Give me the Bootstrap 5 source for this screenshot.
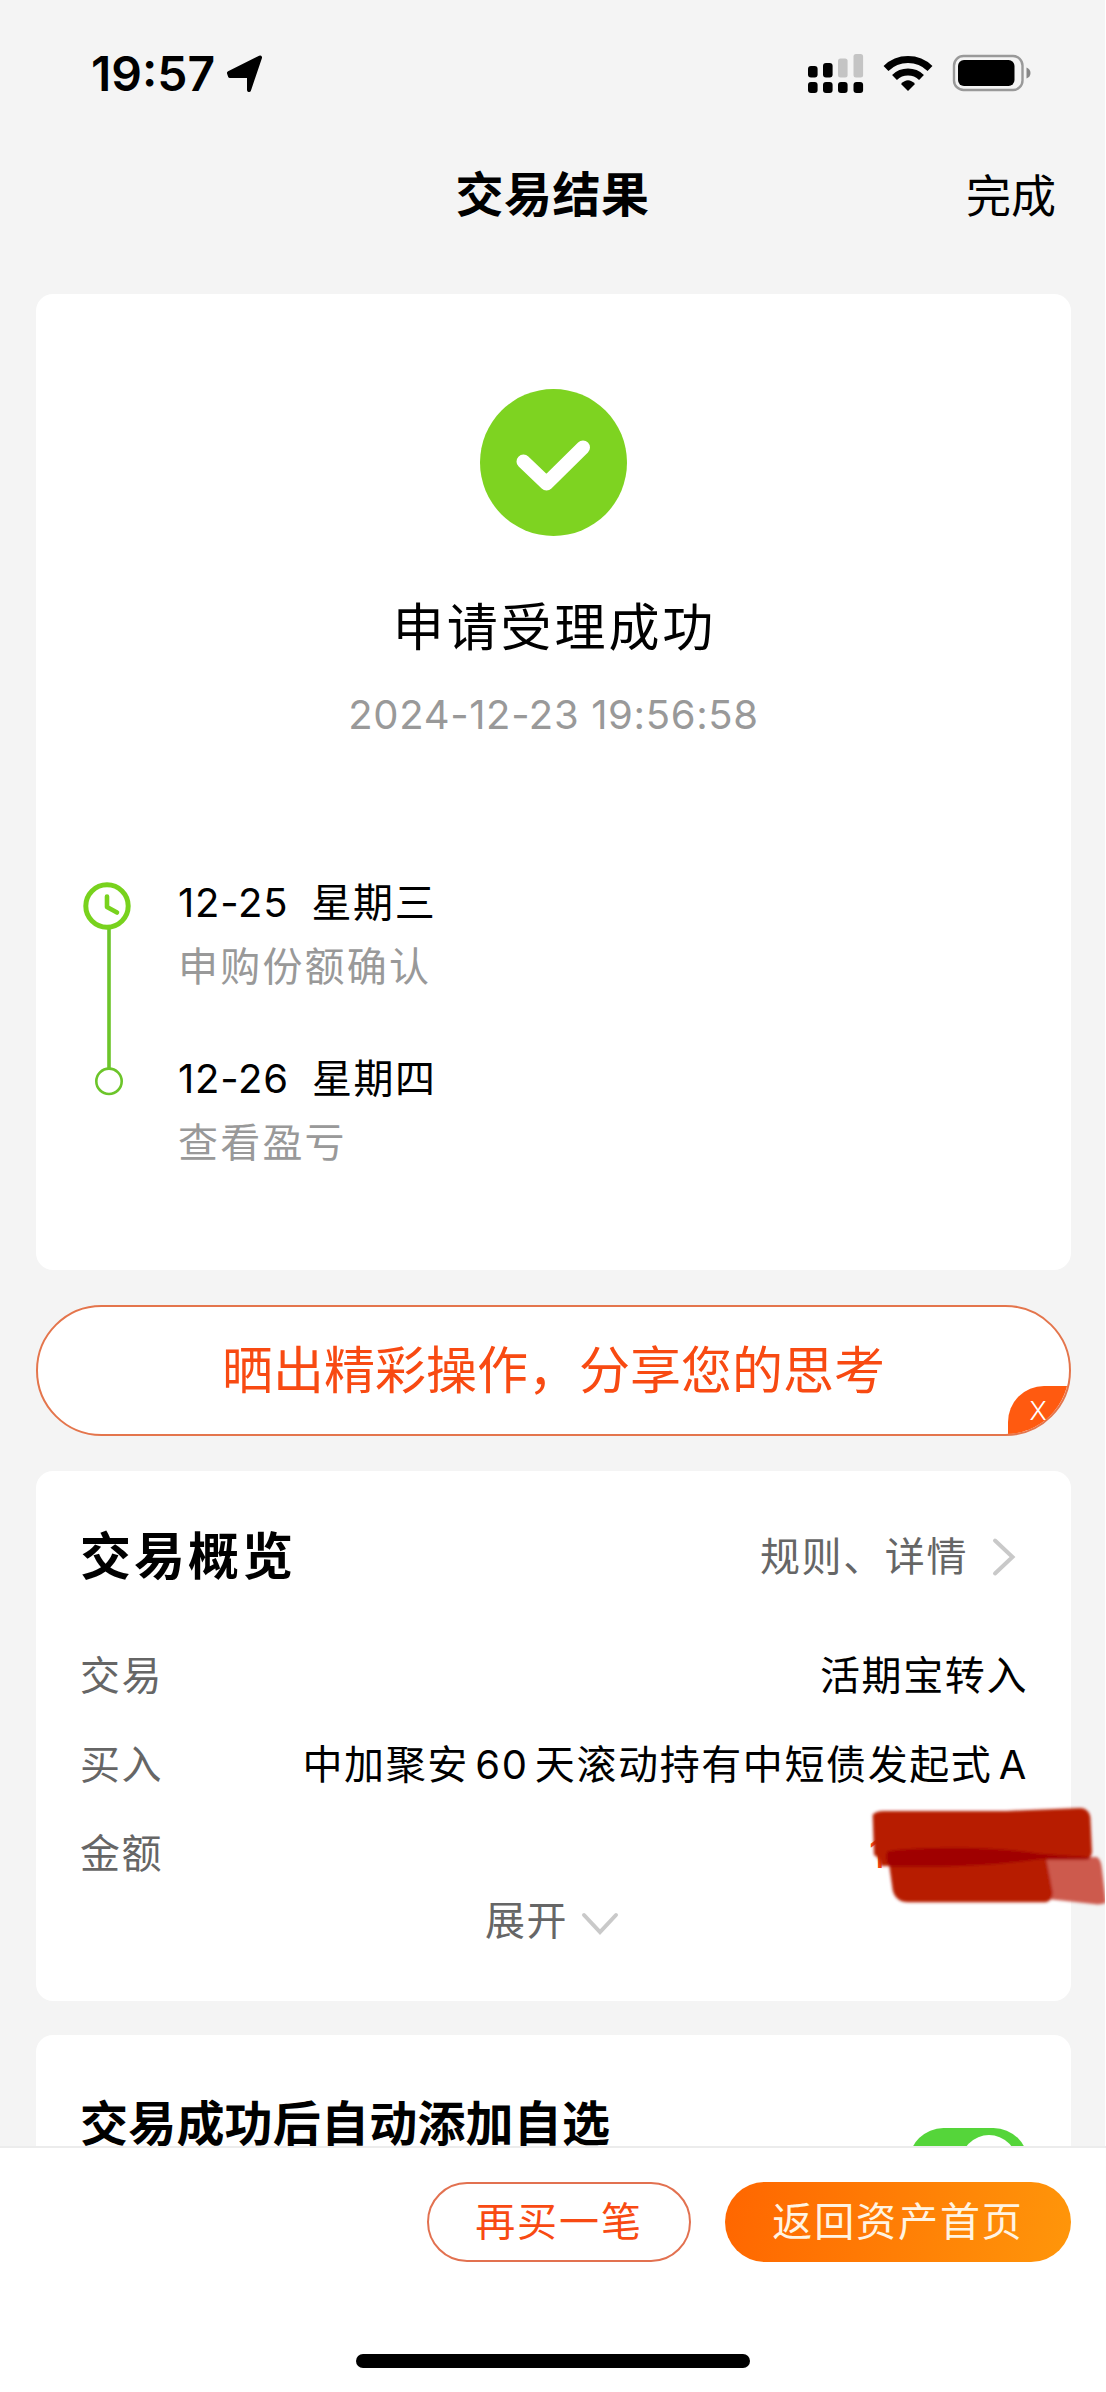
<!DOCTYPE html>
<html lang="zh-CN">
<head>
<meta charset="utf-8">
<meta name="viewport" content="width=device-width, initial-scale=1">
<title>交易结果</title>
<link href="https://cdn.jsdelivr.net/npm/bootstrap@5.3.0/dist/css/bootstrap.min.css" rel="stylesheet">
<style>
  body { background: #fff; color: #000; font-family: Inter, "Noto Sans CJK SC", sans-serif; font-size: 40px; line-height: 60px; }
  svg { display: block; }
  .app { width: 1106px; height: 2392px; overflow: hidden; }
  .screen { width: 1105px; height: 2146px; background: #f4f4f4; overflow: hidden; }
  .status { height: 148px; padding: 0 73px 0 91px; }
  .clock { font-size: 48px; font-weight: 600; letter-spacing: 0; }
  .arrow { margin-left: 11px; }
  .topbar { height: 93px; }
  .topbar h1 { font-size: 48px; font-weight: 700; letter-spacing: .5px; line-height: 60px; margin: 0; }
  .done { font-size: 45px; right: 49px; top: 19px; line-height: 60px; color: #000; }
  .stack { padding: 53px 34px 0 36px; }
  .panel { border: 0; border-radius: 17px; background: #fff; color: #000; }
  .panel-result { height: 976px; padding: 95px 40px 0; }
  .result-title { font-size: 51px; letter-spacing: 2.9px; line-height: 64px; margin: 60px 0 30px; font-weight: 400; padding-left: 2px; }
  .stamp { color: #999; line-height: 50px; letter-spacing: .65px; margin-bottom: 132px; }
  .steps { gap: 38px; letter-spacing: 1.5px; }
  .step-text { padding-top: 1px; }
  .step-date { letter-spacing: .8px; }
  .step-day { margin-left: 23px; letter-spacing: 1.6px; }
  .soft { color: #999; letter-spacing: 2.2px; }
  .mid { color: #666; letter-spacing: 1.6px; }
  .share { height: 131px; margin: 35px 0; border: 2px solid #e4754c; border-radius: 66px; background: #fff; color: #f84a12; font-size: 51px; overflow: hidden; }
  .share-close { right: -2px; bottom: -2px; width: 63px; height: 50px; border-radius: 36px 0 0 0; background: #ff5a10; color: #fff; font-size: 26px; font-weight: 300; line-height: 50px; padding-right: 3px; }
  .panel-overview { height: 530px; padding: 56px 43px 0 44px; }
  .panel-overview h2 { font-size: 51px; font-weight: 700; letter-spacing: 3px; line-height: 60px; margin: 0; }
  .pairs { margin-top: 44px; }
  .pair { height: 89px; line-height: 89px; }
  .val { letter-spacing: 1.6px; word-spacing: -6.5px; }
  .amount { color: #f84a12; width: 159px; }
  .more { line-height: 50px; gap: 13px; margin: -2px 4px 0 0; }
  .more svg { margin-top: 5px; }
  .scribble { left: 804px; top: 309px; }
  .panel-watch { margin-top: 34px; height: 300px; padding: 59px 43px 0 44px; }
  .panel-watch h2 { font-size: 48px; font-weight: 700; letter-spacing: .2px; line-height: 60px; margin: 0; }
  .toggle { width: 119px; height: 69px; border-radius: 35px; background: #55d53a; padding: 7px 11px; margin-top: 34px; }
  .knob { width: 56px; height: 56px; border-radius: 50%; background: #fff; }
  .actions { height: 246px; border-top: 2px solid #ececec; background: #fff; }
  .action-row { padding: 34px 35px 0 0; gap: 34px; }
  .pill { height: 80px; border-radius: 40px; padding: 0; font-size: 40px; letter-spacing: 1.9px; line-height: 76px; }
  .pill-again { width: 264px; border: 2px solid #e27150; color: #f84a12; }
  .pill-home { width: 346px; border: 0; color: #fff4e2; background: linear-gradient(100deg, #ff6600, #ff960a); }
  .home-bar { width: 394px; height: 14px; border-radius: 7px; background: #000; margin-top: 92px; }
</style>
</head>
<body>
<div class="app">
  <div class="screen">
    <header>
      <div class="status d-flex align-items-center">
        <span class="clock">19:57</span>
        <svg class="arrow" width="40" height="40" viewBox="0 0 40 40"><path d="M3 19 34 3.500 23 36V22H4Z" stroke="#000" stroke-width="4" stroke-linejoin="round"/></svg>
        <svg class="ms-auto" width="224" height="44" viewBox="808 52 224 44">
          <g><rect x="808" y="66" width="9.600" height="11.500" rx="3"/><rect x="823" y="63" width="9.600" height="14.500" rx="3"/><g fill="#c4c4c4"><rect x="838" y="58.500" width="9.600" height="19" rx="2.500"/><rect x="853.500" y="54" width="9.600" height="23.500" rx="2.500"/></g>
          <rect x="808" y="82" width="9.600" height="11" rx="3"/><rect x="823" y="82" width="9.600" height="11" rx="3"/><rect x="838" y="82" width="9.600" height="11" rx="3"/><rect x="853.500" y="82" width="9.600" height="11" rx="3"/></g>
          <g fill="none" stroke="#000" stroke-width="7"><path d="M886 68.500A31.500 31.500 0 0 1 930 68.500"/><path d="M894.500 77.500A19.500 19.500 0 0 1 921.500 77.500"/></g>
          <path d="M908 91 901 84Q908 76.500 915 84Z"/>
          <rect x="954" y="56" width="68.500" height="34" rx="9.500" fill="none" stroke="#999" stroke-width="2.400"/>
          <rect x="958" y="60" width="56.500" height="26" rx="6"/>
          <path d="M1026.500 67.500Q1030.500 69 1030.500 73T1026.500 78.500Z" fill="#888"/>
        </svg>
      </div>
      <div class="topbar position-relative d-flex justify-content-center align-items-center">
        <h1>交易结果</h1>
        <a class="done position-absolute text-decoration-none">完成</a>
      </div>
    </header>

    <main class="stack">
      <section class="card panel panel-result">
        <div class="text-center">
          <svg class="mx-auto" width="147" height="147" viewBox="0 0 147 147"><circle cx="73.500" cy="73.500" r="73.500" fill="#7ed321"/><path d="M43.500 72.500 66.500 94.500 103 58.500" fill="none" stroke="#fff" stroke-width="14" stroke-linecap="round" stroke-linejoin="round"/></svg>
          <h2 class="result-title">申请受理成功</h2>
          <div class="stamp">2024-12-23 19:56:58</div>
        </div>
        <div class="steps d-flex">
          <svg width="64" height="235" viewBox="76 872 64 235" fill="none">
            <path d="M109 928V1068" stroke="#6cc52a" stroke-width="3.600"/>
            <circle cx="107" cy="906" r="21.200" stroke="#78d21d" stroke-width="5"/>
            <path d="M107 896.500V907L117 912.500" stroke="#78d21d" stroke-width="4.600" stroke-linecap="round" stroke-linejoin="round"/>
            <circle cx="109" cy="1081.300" r="12.700" stroke="#6cc52a" stroke-width="2.600"/>
          </svg>
          <div class="step-text">
            <div><span class="step-date">12-25</span><span class="step-day">星期三</span></div>
            <div class="soft mt-1">申购份额确认</div>
            <div class="mt-5 pt-1"><span class="step-date">12-26</span><span class="step-day">星期四</span></div>
            <div class="soft mt-1">查看盈亏</div>
          </div>
        </div>
      </section>

      <div class="share position-relative d-flex justify-content-center align-items-center">
        晒出精彩操作，分享您的思考
        <span class="share-close position-absolute text-center">X</span>
      </div>

      <section class="card panel panel-overview position-relative">
        <div class="d-flex justify-content-between align-items-center">
          <h2>交易概览</h2>
          <div class="mid d-flex align-items-center">规则、详情
            <svg width="60" height="42" viewBox="0 0 60 42"><path d="M27 4.500 44.500 21 27 37.500" fill="none" stroke="#c9c9c9" stroke-width="4" stroke-linecap="round"/></svg>
          </div>
        </div>
        <div class="pairs">
          <div class="pair d-flex justify-content-between"><span class="mid">交易</span><span class="val">活期宝转入</span></div>
          <div class="pair d-flex justify-content-between"><span class="mid">买入</span><span class="val">中加聚安 60 天滚动持有中短债发起式 A</span></div>
          <div class="pair d-flex justify-content-between"><span class="mid">金额</span><span class="amount">1</span></div>
        </div>
        <div class="more mid d-flex justify-content-center align-items-center">展开
          <svg width="38" height="24" viewBox="0 0 38 24"><path d="M3 3 19 20 35 3" fill="none" stroke="#c9c9c9" stroke-width="4" stroke-linecap="round"/></svg>
        </div>
        <!-- red brush strokes hiding the amount -->
        <svg class="scribble position-absolute" width="266" height="150" viewBox="0 0 798 450">
          <defs><filter id="soft-edge" x="-5%" y="-10%" width="110%" height="120%"><feGaussianBlur stdDeviation="4"/></filter></defs>
          <g filter="url(#soft-edge)">
            <path d="M612 236 770 231Q782 236 785 260L798 368Q780 376 760 372L630 358Z" fill="#cd5a4e"/>
            <path d="M98 104Q108 93 130 93H500L720 84Q745 84 751 110L756 215Q754 238 735 240H600L440 258H122Q118 230 102 225Z" fill="#b71c02"/>
            <path d="M144 230 158 330Q166 366 205 367H618Q640 360 638 335L617 225Z" fill="#b71c02"/>
            <path d="M142 214Q200 203 350 203 480 203 600 221L748 232V238H600Q450 258 300 260H150Q134 240 142 214Z" fill="#a00000"/>
          </g>
        </svg>
      </section>

      <section class="card panel panel-watch flex-row justify-content-between align-items-start">
        <h2>交易成功后自动添加自选</h2>
        <div class="toggle d-flex justify-content-end"><span class="knob"></span></div>
      </section>
    </main>
  </div>

  <footer class="actions">
    <div class="action-row d-flex justify-content-end">
      <button class="btn pill pill-again">再买一笔</button>
      <button class="btn pill pill-home">返回资产首页</button>
    </div>
    <div class="home-bar mx-auto"></div>
  </footer>
</div>
<script src="https://cdn.jsdelivr.net/npm/bootstrap@5.3.0/dist/js/bootstrap.bundle.min.js"></script>
</body>
</html>
